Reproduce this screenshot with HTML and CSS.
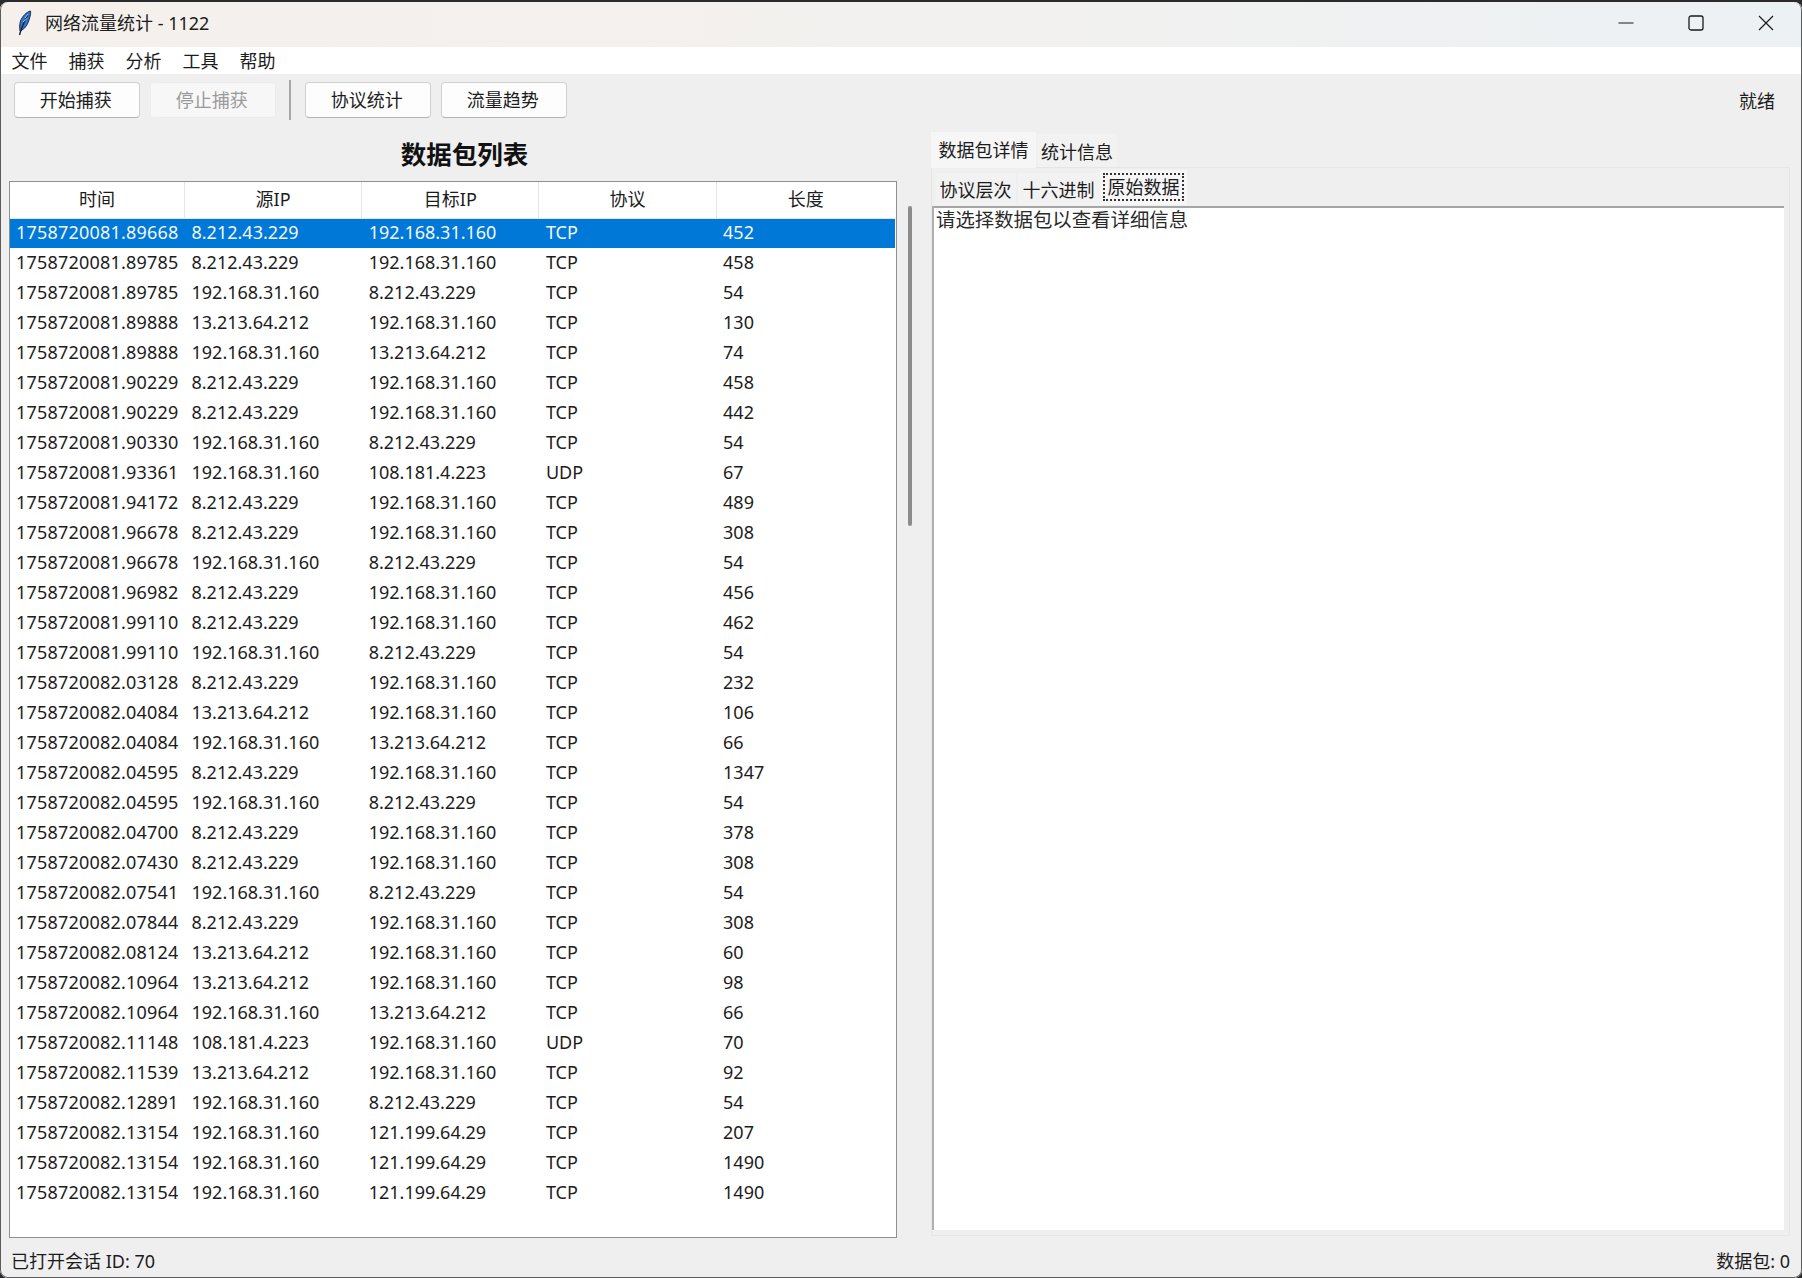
FILE: index.html
```html
<!DOCTYPE html>
<html lang="zh-CN">
<head>
    <meta charset="UTF-8">
    <title>网络流量统计 - 1122</title>
    <link rel="stylesheet" href="styles.css">
</head>
<body>
<div class="window">
    <div class="titlebar">
        <svg class="app-icon" width="18" height="26" viewBox="0 0 18 26">
            <path d="M15.500 1C11.500 2 7.500 6 5.500 11C4.500 14 4.500 18 5 21L7 20C10.500 18 13 14 14.300 9C15.300 6 16 3 15.500 1Z" fill="#2f73c9" stroke="#1c2c48" stroke-width="1"/>
            <path d="M13 5C10.500 9 8 14 6 20L4.500 25" fill="none" stroke="#14233c" stroke-width="1.400"/>
            <path d="M13 4L10 8M12.500 8L8 12" stroke="#9cc7f2" stroke-width="1"/>
        </svg>
        <span class="title-text">网络流量统计 - 1122</span>
        <div class="win-controls">
            <div class="win-btn"><svg width="16" height="16" viewBox="0 0 16 16"><path d="M0.500 8H15.500" stroke="#1a1a1a" stroke-width="1.200"/></svg></div>
            <div class="win-btn"><svg width="16" height="16" viewBox="0 0 16 16"><rect x="1" y="1" width="14" height="14" rx="2" fill="none" stroke="#1a1a1a" stroke-width="1.300"/></svg></div>
            <div class="win-btn"><svg width="16" height="16" viewBox="0 0 16 16"><path d="M1 1L15 15M15 1L1 15" stroke="#1a1a1a" stroke-width="1.200"/></svg></div>
        </div>
    </div>

    <div class="menubar">
        <span class="menu-item">文件</span>
        <span class="menu-item">捕获</span>
        <span class="menu-item">分析</span>
        <span class="menu-item">工具</span>
        <span class="menu-item">帮助</span>
    </div>

    <div class="toolbar">
        <button class="btn">开始捕获</button>
        <button class="btn btn-disabled">停止捕获</button>
        <div class="toolbar-sep"></div>
        <button class="btn">协议统计</button>
        <button class="btn">流量趋势</button>
        <span class="status-ready">就绪</span>
    </div>

    <div class="main">
        <div class="left-panel">
            <h2 class="list-title">数据包列表</h2>
            <div class="tree">
                <table class="packets">
                    <thead>
                        <tr><th>时间</th><th>源IP</th><th>目标IP</th><th>协议</th><th>长度</th></tr>
                    </thead>
                    <tbody>
                        <tr class="selected"><td>1758720081.89668</td><td>8.212.43.229</td><td>192.168.31.160</td><td>TCP</td><td>452</td></tr>
                        <tr><td>1758720081.89785</td><td>8.212.43.229</td><td>192.168.31.160</td><td>TCP</td><td>458</td></tr>
                        <tr><td>1758720081.89785</td><td>192.168.31.160</td><td>8.212.43.229</td><td>TCP</td><td>54</td></tr>
                        <tr><td>1758720081.89888</td><td>13.213.64.212</td><td>192.168.31.160</td><td>TCP</td><td>130</td></tr>
                        <tr><td>1758720081.89888</td><td>192.168.31.160</td><td>13.213.64.212</td><td>TCP</td><td>74</td></tr>
                        <tr><td>1758720081.90229</td><td>8.212.43.229</td><td>192.168.31.160</td><td>TCP</td><td>458</td></tr>
                        <tr><td>1758720081.90229</td><td>8.212.43.229</td><td>192.168.31.160</td><td>TCP</td><td>442</td></tr>
                        <tr><td>1758720081.90330</td><td>192.168.31.160</td><td>8.212.43.229</td><td>TCP</td><td>54</td></tr>
                        <tr><td>1758720081.93361</td><td>192.168.31.160</td><td>108.181.4.223</td><td>UDP</td><td>67</td></tr>
                        <tr><td>1758720081.94172</td><td>8.212.43.229</td><td>192.168.31.160</td><td>TCP</td><td>489</td></tr>
                        <tr><td>1758720081.96678</td><td>8.212.43.229</td><td>192.168.31.160</td><td>TCP</td><td>308</td></tr>
                        <tr><td>1758720081.96678</td><td>192.168.31.160</td><td>8.212.43.229</td><td>TCP</td><td>54</td></tr>
                        <tr><td>1758720081.96982</td><td>8.212.43.229</td><td>192.168.31.160</td><td>TCP</td><td>456</td></tr>
                        <tr><td>1758720081.99110</td><td>8.212.43.229</td><td>192.168.31.160</td><td>TCP</td><td>462</td></tr>
                        <tr><td>1758720081.99110</td><td>192.168.31.160</td><td>8.212.43.229</td><td>TCP</td><td>54</td></tr>
                        <tr><td>1758720082.03128</td><td>8.212.43.229</td><td>192.168.31.160</td><td>TCP</td><td>232</td></tr>
                        <tr><td>1758720082.04084</td><td>13.213.64.212</td><td>192.168.31.160</td><td>TCP</td><td>106</td></tr>
                        <tr><td>1758720082.04084</td><td>192.168.31.160</td><td>13.213.64.212</td><td>TCP</td><td>66</td></tr>
                        <tr><td>1758720082.04595</td><td>8.212.43.229</td><td>192.168.31.160</td><td>TCP</td><td>1347</td></tr>
                        <tr><td>1758720082.04595</td><td>192.168.31.160</td><td>8.212.43.229</td><td>TCP</td><td>54</td></tr>
                        <tr><td>1758720082.04700</td><td>8.212.43.229</td><td>192.168.31.160</td><td>TCP</td><td>378</td></tr>
                        <tr><td>1758720082.07430</td><td>8.212.43.229</td><td>192.168.31.160</td><td>TCP</td><td>308</td></tr>
                        <tr><td>1758720082.07541</td><td>192.168.31.160</td><td>8.212.43.229</td><td>TCP</td><td>54</td></tr>
                        <tr><td>1758720082.07844</td><td>8.212.43.229</td><td>192.168.31.160</td><td>TCP</td><td>308</td></tr>
                        <tr><td>1758720082.08124</td><td>13.213.64.212</td><td>192.168.31.160</td><td>TCP</td><td>60</td></tr>
                        <tr><td>1758720082.10964</td><td>13.213.64.212</td><td>192.168.31.160</td><td>TCP</td><td>98</td></tr>
                        <tr><td>1758720082.10964</td><td>192.168.31.160</td><td>13.213.64.212</td><td>TCP</td><td>66</td></tr>
                        <tr><td>1758720082.11148</td><td>108.181.4.223</td><td>192.168.31.160</td><td>UDP</td><td>70</td></tr>
                        <tr><td>1758720082.11539</td><td>13.213.64.212</td><td>192.168.31.160</td><td>TCP</td><td>92</td></tr>
                        <tr><td>1758720082.12891</td><td>192.168.31.160</td><td>8.212.43.229</td><td>TCP</td><td>54</td></tr>
                        <tr><td>1758720082.13154</td><td>192.168.31.160</td><td>121.199.64.29</td><td>TCP</td><td>207</td></tr>
                        <tr><td>1758720082.13154</td><td>192.168.31.160</td><td>121.199.64.29</td><td>TCP</td><td>1490</td></tr>
                        <tr><td>1758720082.13154</td><td>192.168.31.160</td><td>121.199.64.29</td><td>TCP</td><td>1490</td></tr>
                    </tbody>
                </table>
            </div>
        </div>

        <div class="scroll-col"><div class="scroll-thumb"></div></div>

        <div class="right-panel">
            <div class="tabs">
                <div class="tab tab-active">数据包详情</div>
                <div class="tab">统计信息</div>
            </div>
            <div class="tab-body">
                <div class="subtabs">
                    <div class="subtab">协议层次</div>
                    <div class="subtab">十六进制</div>
                    <div class="subtab subtab-active"><span class="focus-ring">原始数据</span></div>
                </div>
                <div class="text-area">请选择数据包以查看详细信息</div>
            </div>
        </div>
    </div>

    <div class="statusbar">
        <span>已打开会话 ID: 70</span>
        <span>数据包: 0</span>
    </div>
</div>
</body>
</html>
```

FILE: styles.css
```css
html, body {
    margin: 0;
    height: 100%;
}
body {
    background-color: #2b2b2b;
    font-family: "Noto Sans", "Noto Sans CJK SC", sans-serif;
    font-size: 18px;
    color: #1c1c1c;
    overflow: hidden;
}
.window {
    position: relative;
    display: flex;
    flex-direction: column;
    height: 1276px;
    margin-top: 2px;
    background-color: #efefef;
    border-radius: 8px;
    overflow: hidden;
}
/* thin dark frame over the window edge */
.window::after {
    content: "";
    position: absolute;
    inset: 0;
    border: 1px solid #5c5c5c;
    border-top: none;
    border-radius: 8px;
    pointer-events: none;
}

/* title bar */
.titlebar {
    display: flex;
    align-items: center;
    height: 45px;
    flex: none;
    padding: 0 1px 4px 0;
    box-sizing: border-box;
    background: linear-gradient(90deg, #f5f0ec 0%, #f3f1ef 50%, #ecf1f4 100%);
}
.app-icon {
    margin-left: 15px;
    flex: none;
}
.title-text {
    margin-left: 12px;
    padding-bottom: 2px;
}
.win-controls {
    display: flex;
    margin-left: auto;
    height: 100%;
}
.win-btn {
    width: 70px;
    display: flex;
    align-items: center;
    justify-content: center;
}

/* menu */
.menubar {
    display: flex;
    align-items: center;
    height: 27px;
    flex: none;
    background-color: #fff;
    padding: 0 0 2px 1px;
    box-sizing: border-box;
}
.menu-item {
    padding: 0 10.500px;
}

/* toolbar */
.toolbar {
    display: flex;
    align-items: center;
    height: 51px;
    flex: none;
    padding: 0 27px 0 14px;
    box-sizing: border-box;
}
.btn {
    width: 125.500px;
    height: 36px;
    padding: 0 2px 2px 0;
    margin-right: 10.500px;
    font: inherit;
    color: inherit;
    background-color: #fdfdfd;
    border: 1px solid #d0d0d0;
    border-bottom-color: #b4b4b4;
    border-radius: 4px;
}
.btn-disabled {
    color: #9a9a9a;
    background-color: #f7f7f7;
    border-color: #ececec;
}
.toolbar-sep {
    width: 2px;
    height: 40px;
    background-color: #a8a8a8;
    margin: 0 14px 0 3px;
}
.status-ready {
    margin-left: auto;
}

/* main area */
.main {
    display: flex;
    flex: 1;
    min-height: 0;
}
.left-panel {
    width: 888px;
    margin-left: 9px;
    display: flex;
    flex-direction: column;
    flex: none;
}
.list-title {
    height: 56px;
    margin: 0;
    flex: none;
    box-sizing: border-box;
    padding: 12px 0 0 23px;
    text-align: center;
    font-size: 25.500px;
    line-height: 34px;
    font-weight: 700;
    color: #111;
}
.tree {
    flex: 1;
    background-color: #fff;
    border: 1px solid #8f8f8f;
    overflow: hidden;
}
.packets {
    width: 885px;
    table-layout: fixed;
    border-collapse: collapse;
}
.packets th {
    width: 177.200px;
    height: 36px;
    padding: 0 0 4px;
    box-sizing: border-box;
    font-weight: 400;
    border-right: 1px solid #e5e5e5;
    border-bottom: 1px solid #e5e5e5;
}
.packets th:first-child {
    width: 174.500px;
}
.packets th:last-child {
    width: auto;
    border-right: none;
}
.packets td {
    height: 30px;
    padding: 0 6px 2px 7px;
    box-sizing: border-box;
    white-space: nowrap;
    overflow: hidden;
}
.packets td:first-child {
    padding-left: 6px;
    letter-spacing: 0.200px;
}
.packets .selected td {
    background-color: #0078d7;
    color: #f2f7fc;
}

.scroll-col {
    width: 34px;
    flex: none;
}
.scroll-thumb {
    width: 4px;
    height: 320px;
    margin: 81px 0 0 11px;
    background-color: #8c8c8c;
    border-radius: 2px;
}

/* right side tabs */
.right-panel {
    width: 859px;
    display: flex;
    flex-direction: column;
    flex: none;
    padding: 7px 0 2px;
    box-sizing: border-box;
}
.tabs {
    display: flex;
    align-items: flex-end;
    height: 35px;
    flex: none;
    position: relative;
    z-index: 1;
}
.tab {
    width: 80px;
    height: 33px;
    margin-left: 1px;
    line-height: 37px;
    text-align: center;
    background-color: #f2f2f2;
}
.tab-active {
    width: 105px;
    height: 36px;
    margin: 0 0 -1px;
    line-height: 36px;
    background-color: #f6f6f6;
}
.tab-body {
    flex: 1;
    display: flex;
    flex-direction: column;
    border: 1px solid #e6e6e6;
    padding: 2px 5px 5px 0;
    min-height: 0;
    box-shadow: inset 0 -3px 0 #efefef;
}
.subtabs {
    display: flex;
    align-items: flex-end;
    height: 35px;
    flex: none;
    padding-left: 3px;
}
.subtab {
    width: 81px;
    height: 32px;
    margin-right: 2px;
    line-height: 34px;
    text-align: center;
    background-color: #f2f2f2;
}
.subtab-active {
    width: 87px;
    height: 35px;
    margin: 0 0 0 -1px;
    padding-top: 3px;
    box-sizing: border-box;
    background-color: #f6f6f6;
}
.focus-ring {
    display: block;
    width: 81px;
    height: 28px;
    margin-left: 3px;
    box-sizing: border-box;
    line-height: 28px;
    outline: 2px dotted #333;
    outline-offset: -2px;
}
.text-area {
    flex: 1;
    margin-top: 1px;
    background-color: #fff;
    border-top: 2px solid #a6a6a6;
    border-left: 2px solid #b0b0b0;
    padding: 0 0 0 2px;
    font-size: 19.400px;
    line-height: 24px;
    color: #2a2a2a;
}

/* status bar */
.statusbar {
    display: flex;
    justify-content: space-between;
    align-items: center;
    height: 40px;
    flex: none;
    padding: 3px 12px 0 11px;
    box-sizing: border-box;
}
```
